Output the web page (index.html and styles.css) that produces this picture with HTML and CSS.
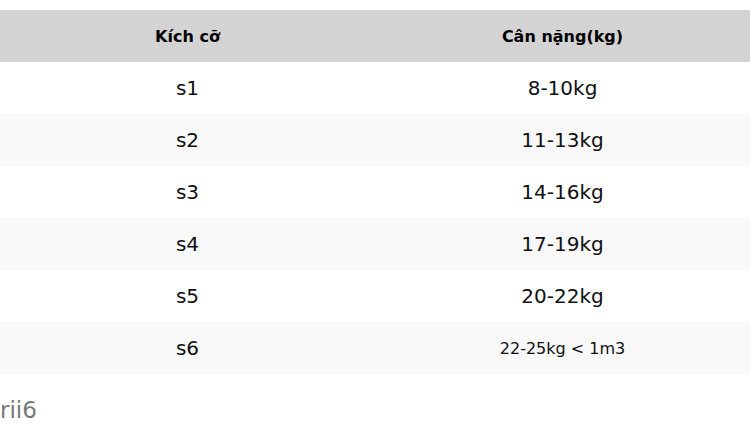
FILE: index.html
```
<!DOCTYPE html>
<html lang="vi">
<head>
<meta charset="utf-8">
<link rel="stylesheet" href="styles.css">
</head>
<body>
<table class="size-table">
  <thead>
    <tr><th>Kích cỡ</th><th>Cân nặng(kg)</th></tr>
  </thead>
  <tbody>
    <tr><td>s1</td><td>8-10kg</td></tr>
    <tr><td>s2</td><td>11-13kg</td></tr>
    <tr><td>s3</td><td>14-16kg</td></tr>
    <tr><td>s4</td><td>17-19kg</td></tr>
    <tr><td>s5</td><td>20-22kg</td></tr>
    <tr><td>s6</td><td class="small">22-25kg &lt; 1m3</td></tr>
  </tbody>
</table>
<p class="note">rii6</p>
</body>
</html>
```
FILE: styles.css
```
html, body {
  margin: 0;
  padding: 0;
  background: #fff;
  font-family: "DejaVu Sans", sans-serif;
}
.size-table {
  width: 750px;
  margin-top: 10px;
  border-collapse: collapse;
  table-layout: fixed;
}
.size-table th {
  background: #d3d3d3;
  color: #000;
  font-size: 16px;
  font-weight: bold;
  height: 52px;
  padding: 0;
  text-align: center;
}
.size-table td {
  height: 52px;
  padding: 0;
  text-align: center;
  font-size: 20px;
  color: #111;
}
.size-table tbody tr:nth-child(even) td {
  background: #f8f8f8;
}
.size-table td.small {
  font-size: 16px;
}
.note {
  margin: 22px 0 0 0;
  font-size: 23px;
  color: #777;
  line-height: 28px;
}
```
